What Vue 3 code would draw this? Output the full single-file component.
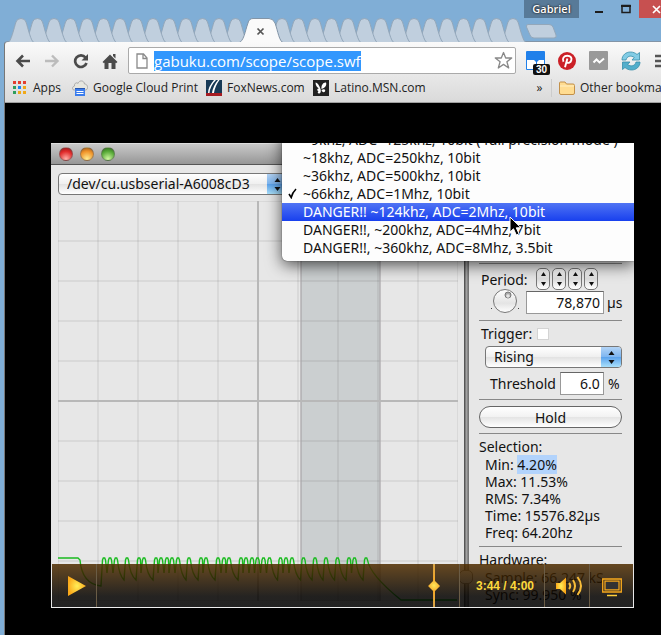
<script setup>
import { onMounted, ref } from 'vue'

const address = ref('gabuku.com/scope/scope.swf')
const addressBox = ref(null)
const port = ref('/dev/cu.usbserial-A6008cD3')
const edge = ref('Rising')
const period = ref('78,870')
const threshold = ref('6.0')
const position = ref(227)
const trigger = ref(false)

const leftTabs = Array.from({ length: 14 }, (_, i) => 17 + i * 16.5).reverse()
const rightTabs = Array.from({ length: 15 }, (_, i) => 278 + i * 16.5).reverse()

const rates = [
  '~9khz, ADC=125khz, 10bit ( full precision mode )',
  '~18khz, ADC=250khz, 10bit',
  '~36khz, ADC=500khz, 10bit',
  '~66khz, ADC=1Mhz, 10bit',
  'DANGER!! ~124khz, ADC=2Mhz, 10bit',
  'DANGER!!, ~200khz, ADC=4Mhz, 7bit',
  'DANGER!!, ~360khz, ADC=8Mhz, 3.5bit'
]
const checked = 3
const hovered = 4

const readings = [
  ['Min:', '4.20%'],
  ['Max:', '11.53%'],
  ['RMS:', '7.34%'],
  ['Time:', '15576.82µs'],
  ['Freq:', '64.20hz']
]

const appColours = ['#e33e2f', '#e33e2f', '#e33e2f', '#2f9e5c', '#1a84f2', '#f0a818', '#2f9e5c', '#f0a818', '#f0a818']

const peaks = [
  46, 52, 58, 69, 81, 86, 98, 103, 109, 114, 120, 131, 143, 148, 160, 166, 171, 183, 188, 194,
  199.5, 205.5, 211.5, 222.5, 228, 234, 245.5, 257, 268, 279.5, 291, 296.5, 308
]
const gridLines = [0, 1, 2, 3, 4, 5, 6, 7, 8, 9, 10].map(n => n * 40)

function buildTrace() {
  let d = 'M0 357H20L22 359Q24 383 43 385'
  peaks.forEach((p, i) => {
    d += `L${p - 1.5} 359L${p - 0.7} 357H${p + 0.7}L${p + 1.5} 359`
    const next = peaks[i + 1]
    if (next) {
      const wide = next - p > 8
      const low = wide ? 379 : 372
      d += wide ? `Q${p + 3} 374 ${next - 3} ${low}` : `L${next - 3} ${low}`
    }
  })
  return d + 'Q312 374 343 399H399'
}
const trace = buildTrace()

onMounted(() => {
  addressBox.value.focus()
  addressBox.value.select()
})
</script>

<template>
  <div class="desktop">
    <header class="frame-top">
      <svg class="tabs" width="580" height="42" viewBox="0 0 580 42" aria-hidden="true">
        <g fill="#c0cfde" stroke="#93a7ba" stroke-width="1">
          <path v-for="c in rightTabs" :key="c" :transform="`translate(${c} 0)`" d="M-13 42.500C-10 42-7 28-5 22Q-4 18.500 0 18.500Q4 18.500 5 22C7 28 10 42 13 42.500" />
          <path v-for="c in leftTabs" :key="c" :transform="`translate(${c} 0)`" d="M-13 42.500C-10 42-7 28-5 22Q-4 18.500 0 18.500Q4 18.500 5 22C7 28 10 42 13 42.500" />
          <path d="M524 24.500H545Q548 24.500 549 27L552 35Q553 38 550 38H530Q527 38 526 35L522.500 27Q522 24.500 524 24.500Z" />
        </g>
        <path d="M234 43C240 42 241 31 244 23Q245 18.500 249 18.500H265Q269 18.500 271 23C274 31 275 42 280 43" fill="#fafafa" stroke="#8395a7" />
      </svg>
      <button class="tab-close" aria-label="Close tab">
        <svg width="9" height="9" viewBox="0 0 9 9"><path d="M1.500 1.500L7.500 7.500M7.500 1.500L1.500 7.500" stroke="#555" stroke-width="1.700" /></svg>
      </button>
      <div class="window-controls">
        <button class="profile">Gabriel</button>
        <button class="minimise" aria-label="Minimize"><svg width="8" height="18"><path d="M0 12H8" stroke="#1d1d1d" stroke-width="2" /></svg></button>
        <button class="maximise" aria-label="Maximize"><svg width="10" height="18"><path d="M1 5.500H9V12.500H1Z" fill="none" stroke="#1d1d1d" stroke-width="1.500" /><path d="M0 6H10" stroke="#1d1d1d" stroke-width="2" /></svg></button>
        <button class="close" aria-label="Close"><svg width="9" height="18"><path d="M1 6L8 13M8 6L1 13" stroke="#fff" stroke-width="1.700" /></svg></button>
      </div>
    </header>

    <div class="browser">
      <div class="toolbar">
        <nav class="nav">
          <button aria-label="Back"><svg width="16" height="14" viewBox="0 0 16 14"><path d="M8 1.500L2.500 7L8 12.500M3 7H15" fill="none" stroke="#4b4b4b" stroke-width="2.600" /></svg></button>
          <button aria-label="Forward"><svg width="16" height="14" viewBox="0 0 16 14"><path d="M8 1.500L13.500 7L8 12.500M13 7H1" fill="none" stroke="#bcbcbc" stroke-width="2.400" /></svg></button>
          <button aria-label="Reload"><svg width="16" height="16" viewBox="0 0 16 16"><path d="M12.500 4.500A5.800 5.800 0 1 0 13.500 10" fill="none" stroke="#4b4b4b" stroke-width="2.700" /><path d="M15 1V7.500H8.500Z" fill="#4b4b4b" /></svg></button>
          <button aria-label="Home"><svg width="16" height="16" viewBox="0 0 16 16"><path d="M0.500 9L8 1.500L15.500 9L14 10.200L13.500 9.600V16H9.500V10H6.500V16H2.500V9.600L2 10.200ZM11 1H13.500V5.500L11 3Z" fill="#4b4b4b" /></svg></button>
        </nav>
        <div class="omnibox">
          <svg width="12" height="16" viewBox="0 0 12 16"><path d="M1 1H7.500L11 5V15H1ZM7 1V5.500H11" fill="#fff" stroke="#8a8a8a" stroke-width="1.300" /></svg>
          <input ref="addressBox" v-model="address" class="address" aria-label="Address" spellcheck="false">
          <button aria-label="Bookmark this page"><svg width="19" height="19" viewBox="0 0 19 19"><path d="M9.500 1.500L11.700 7H17.700L12.900 10.800L14.700 17L9.500 13.400L4.300 17L6.100 10.800L1.300 7H7.300Z" fill="#fff" stroke="#888" stroke-width="1.300" stroke-linejoin="round" /></svg></button>
        </div>
        <div class="extensions">
          <button class="tiles" aria-label="Tab count">
            <svg width="19" height="19" viewBox="0 0 19 19"><rect width="19" height="19" rx="1" fill="#2080ea" /><path d="M1 9H8L10 11V18H1ZM11 11L13 9H18V18H11Z" fill="#fff" /></svg>
            <span class="badge">30</span>
          </button>
          <button aria-label="Pin it"><svg width="18" height="18" viewBox="0 0 18 18"><circle cx="9" cy="9" r="9" fill="#cb2027" /><path d="M5.500 9.800C3.800 6.500 6 3.800 9.300 3.800C12.700 3.800 14 6 13.300 8.300C12.700 10.800 10.300 11.500 8.700 10.200M9.400 6.500L7 15.300" fill="none" stroke="#fff" stroke-width="1.900" /></svg></button>
          <button aria-label="Statistics"><svg width="19" height="19" viewBox="0 0 19 19"><rect width="19" height="19" rx="1" fill="#999" /><path d="M4.500 11.500L7.500 8.500L10.500 11.500L15 7.500" fill="none" stroke="#fff" stroke-width="2" /></svg></button>
          <button aria-label="Sync"><svg width="20" height="20" viewBox="0 0 20 20"><g stroke="#378eaa" stroke-width=".8"><path d="M1 9C1 4 5 1 9.500 1C12 1 14.500 2 16 3.500L18.500 1.500V9H11L13.300 6.500C10 4 6 5 5 9Z" fill="#82cce5" /><path d="M19 11C19 16 15 19 10.500 19C8 19 5.500 18 4 16.500L1.500 18.500V11H9L6.700 13.500C10 16 14 15 15 11Z" fill="#53aecb" /></g></svg></button>
          <button aria-label="Menu"><svg width="14" height="14" viewBox="0 0 14 14"><path d="M1 2H14M1 7H14M1 12H14" stroke="#555" stroke-width="2.600" /></svg></button>
        </div>
      </div>
      <nav class="bookmarks">
        <a class="apps" href="#"><svg width="13" height="13" viewBox="0 0 13 13"><rect v-for="(c, i) in appColours" :key="i" :x="(i % 3) * 5" :y="Math.floor(i / 3) * 5" width="3" height="3" :fill="c" /></svg>Apps</a>
        <a class="cloud" href="#"><svg width="16" height="16" viewBox="0 0 16 16"><path d="M2 10C0 10 0 6.500 2.500 6C2 3 5 2 6 3.500C7 0 12 0 12.500 4C16 4 16.500 9 14 10Z" fill="#e6e6df" stroke="#aaa" /><rect x="3" y="9" width="10" height="7" fill="#3b7ded" /><path d="M3 8.500H13" stroke="#2656b0" /><path d="M4.500 11.500H11.500M4.500 13.500H11.500" stroke="#fff" /></svg>Google Cloud Print</a>
        <a class="fox" href="#"><svg width="16" height="16" viewBox="0 0 16 16"><rect width="16" height="16" fill="#183a56" /><path d="M0 13H16V16H0Z" fill="#a61c22" /><path d="M2 13Q2 7 8 0H10Q4 6 3.500 13ZM6 13Q7 6 12 0H13.500Q9 6 8 13Z" fill="#fff" /></svg>FoxNews.com</a>
        <a class="msn" href="#"><svg width="16" height="16" viewBox="0 0 16 16"><rect width="16" height="16" fill="#222" /><path d="M7.500 9C6 5 4.500 2.500 2.500 2.500C2.500 5.500 4 7.500 6 8.500C4 8.500 3.500 10.500 5.500 11C4 12.500 5 14 6.500 13.500C8 13 8 11 7.500 9ZM8.500 9C8 5 10.500 2 13 2.500C14 5.500 12 8 8.500 9ZM8.500 10C11 8.500 13 9.500 12 11.500C10.500 13 9 12 8.500 10Z" fill="#fff" /></svg>Latino.MSN.com</a>
        <div class="bookmarks-end">
          <button class="more" aria-label="More bookmarks">»</button>
          <a class="other" href="#"><svg width="16" height="14" viewBox="0 0 16 14"><path d="M.5 12V2Q.5 1 1.500 1H6L7.500 3H14Q15.500 3 15.500 4.500V12Q15.500 13.500 14 13.500H2Q.5 13.500 .5 12Z" fill="#ffdc91" stroke="#c2904a" /><path d="M1 5H15" stroke="#fff0c4" /></svg>Other bookmarks</a>
        </div>
      </nav>

      <main class="page">
        <section class="video">
          <div class="titlebar"><i class="light red"></i><i class="light amber"></i><i class="light green"></i></div>
          <div class="scope">
            <div class="plot-pane">
              <div class="select-wrap port">
                <select v-model="port" aria-label="Serial port"><option>/dev/cu.usbserial-A6008cD3</option></select>
                <span class="cap"><svg width="7" height="13" viewBox="0 0 7 13"><path d="M3.500 0L6.500 4H.5ZM3.500 13L.5 9H6.500Z" fill="#111" /></svg></span>
              </div>
              <svg class="plot" viewBox="0 0 400 400" role="img" aria-label="Signal trace">
                <path d="M243 0H322V400H243Z" fill="#cbcfd0" />
                <g stroke="#000" stroke-opacity=".06" stroke-width="2">
                  <path v-for="n in gridLines" :key="'v' + n" :d="`M${n} 0V400`" />
                  <path v-for="n in gridLines" :key="'h' + n" :d="`M0 ${n}H400`" />
                </g>
                <path d="M243 0V400M322 0V400" stroke="#a9a5a8" stroke-opacity=".6" stroke-width="2" />
                <path d="M200 0V400M0 200H400" stroke="#b8b8b8" stroke-width="2" />
                <path :d="trace" fill="none" stroke="#1abb1f" stroke-width="1.400" />
              </svg>
            </div>
            <div class="splitter"><i class="handle"></i></div>
            <aside class="panel">
              <div class="group period">
                <div class="row">
                  <label for="period">Period:</label>
                  <div class="steppers">
                    <button v-for="n in 4" :key="n" :aria-label="`Step digit ${n}`"><svg width="13" height="20" viewBox="0 0 13 20"><path d="M6.500 3L9 7H4ZM6.500 17L4 13H9Z" fill="#111" /></svg></button>
                  </div>
                </div>
                <div class="row dial-row">
                  <svg class="dial" width="30" height="30" viewBox="0 0 30 30" role="img" aria-label="Period dial">
                    <defs><linearGradient id="dialFill" x2="0" y2="1"><stop stop-color="#fff" /><stop offset=".6" stop-color="#e4e4e4" /><stop offset="1" stop-color="#fff" /></linearGradient></defs>
                    <circle cx="15" cy="17" r="11.500" fill="url(#dialFill)" stroke="#777" /><circle cx="18" cy="11" r="3" fill="#aaa" stroke="#777" /><circle cx="18" cy="12" r="1.800" fill="#e5e5e5" />
                    <path d="M15 1V2M1 24.500H2M28 24.500H29" stroke="#444" />
                  </svg>
                  <input id="period" v-model="period" class="number wide"><span>µs</span>
                </div>
              </div>
              <div class="group trigger">
                <div class="row"><label for="trigger">Trigger:</label><input id="trigger" v-model="trigger" class="tick" type="checkbox"></div>
                <div class="select-wrap edge">
                  <select v-model="edge" aria-label="Trigger edge"><option>Rising</option></select>
                  <span class="cap"><svg width="7" height="13" viewBox="0 0 7 13"><path d="M3.500 0L6.500 4H.5ZM3.500 13L.5 9H6.500Z" fill="#111" /></svg></span>
                </div>
                <div class="row threshold"><label for="threshold">Threshold</label><input id="threshold" v-model="threshold" class="number"><span>%</span></div>
              </div>
              <div class="group"><button class="hold">Hold</button></div>
              <div class="group readings">
                <h2>Selection:</h2>
                <p v-for="(r, i) in readings" :key="r[0]">{{ r[0] }} <span :class="{ marked: i === 0 }">{{ r[1] }}</span></p>
              </div>
              <div class="group readings hardware">
                <h2>Hardware:</h2>
                <p>Sample: 66.247 kS</p>
                <p>Sync: 99.950 %</p>
              </div>
            </aside>
          </div>

          <ul class="menu">
            <li v-for="(rate, i) in rates" :key="rate">
              <button :class="{ hovered: i === hovered }">
                <svg v-if="i === checked" class="check" width="9" height="11" viewBox="0 0 9 11"><path d="M1 6L3.200 9.500Q4.500 4.500 8 1" fill="none" stroke="#000" stroke-width="1.600" /></svg>{{ rate }}
              </button>
            </li>
          </ul>
          <svg class="cursor" width="14" height="21" viewBox="0 0 14 21" aria-hidden="true"><path d="M1 1V16L4.500 12.800L7.300 19L10 17.800L7.300 11.800H12Z" fill="#000" stroke="#fff" /></svg>

          <div class="controls">
            <button class="play" aria-label="Play"><svg width="18" height="20" viewBox="0 0 18 20"><defs><radialGradient id="gold"><stop stop-color="#ffee58" /><stop offset="1" stop-color="#fba91a" /></radialGradient></defs><path d="M0 0L18 10L0 20Z" fill="url(#gold)" /></svg></button>
            <input v-model="position" class="seek" type="range" min="0" max="240" aria-label="Seek">
            <div class="time">3:44 / 4:00</div>
            <button class="volume" aria-label="Volume"><svg width="28" height="20" viewBox="0 0 28 20"><path d="M0 7H4L10 1.500V18.500L4 13H0Z" fill="url(#gold)" /><path d="M13 7Q15.500 10 13 13M17 4Q21 10 17 16M21.500 1Q28.500 10 21.500 19" fill="none" stroke="#f8bd39" stroke-width="2" /></svg></button>
            <button class="screen" aria-label="Full screen"><svg width="20" height="19" viewBox="0 0 20 19"><path d="M.7 1H19.300V14H.7Z" fill="none" stroke="#f8a91d" stroke-width="1.300" /><path d="M3 3.200H17V11.800H3Z" fill="#333" stroke="#f8a91d" stroke-width="1.200" /><path d="M5 17.500H15" stroke="#ffcf3c" stroke-width="1.500" /></svg></button>
          </div>
        </section>
      </main>
    </div>
  </div>
</template>

<style>
body { background: #80aed6; overflow: hidden; }
</style>

<style scoped>
* { box-sizing: border-box; }
.desktop { min-height: 100vh; display: flex; flex-direction: column; padding-left: 4px; background: #80aed6; overflow: hidden; font: 12px/18px "Open Sans", "Noto Sans", sans-serif; color: #222; }
button { border: 0; padding: 0; margin: 0; background: none; font: inherit; color: inherit; display: flex; align-items: center; justify-content: center; flex: none; }
svg { display: block; flex: none; }
a { color: inherit; text-decoration: none; display: flex; align-items: center; flex: none; white-space: nowrap; }
.frame-top { position: relative; height: 42px; z-index: 1; }
.tab-close { position: absolute; left: 252px; top: 27px; }
.window-controls { position: absolute; top: 0; right: 0; height: 18px; display: flex; }
.profile { width: 55px; background: #587a98; color: #fff; font-size: 11px; font-weight: 600; text-shadow: 0 0 2px #222, 0 0 2px #222; margin-right: 16px; }
.minimise { margin-right: 18px; }
.maximise { margin-right: 8px; }
.close { width: 22px; background: #c75050; justify-content: flex-end; overflow: hidden; padding-left: 18px; }
.browser { flex: 1; display: flex; flex-direction: column; border-left: 1px solid #777; border-top-left-radius: 4px; background: #dcdcdc; border-top: 1px solid #8395a7; margin-top: -1px; }
.toolbar { display: flex; align-items: center; padding-top: 4px; background: linear-gradient(#fafafa, #e8e8e8); border-top-left-radius: 4px; }
.nav { display: flex; align-items: center; gap: 13px; padding: 0 10px 0 10px; height: 27px; }
.omnibox { flex: 1; min-width: 0; display: flex; align-items: center; height: 27px; padding: 0 2px 0 7px; gap: 6px; border: 1px solid #aaa; border-radius: 2px; background: #fff; }
.address { flex: 1; min-width: 0; border: 0; outline: 0; padding: 0; background: none; font: 15px/20px "Open Sans", sans-serif; color: #222; }
.address::selection { background: #3297fd; color: #fff; }
.extensions { width: 145px; display: flex; align-items: center; gap: 13px; padding-left: 10px; overflow: hidden; height: 29px; }
.tiles { position: relative; }
.badge { position: absolute; left: 7px; top: 13px; width: 17px; height: 11px; border-radius: 2px; background: #111; color: #fff; font: bold 10px/11px "Liberation Sans", sans-serif; text-align: center; }
.bookmarks { display: flex; align-items: center; height: 28px; padding: 0 0 2px 8px; background: linear-gradient(#e8e8e8, #dadada); border-bottom: 1px solid #a0a0a0; }
.apps { gap: 7px; width: 59px; }
.cloud { gap: 5px; width: 134px; }
.fox { gap: 5px; width: 107px; }
.msn { gap: 5px; }
.bookmarks-end { margin-left: auto; width: 125px; display: flex; overflow: hidden; }
.more { width: 16px; border-right: 1px solid #ccc; padding-right: 8px; }
.other { gap: 5px; padding-left: 7px; }
.page { flex: 1; background: #000; padding: 40px 27px 27px 46px; }

.video { position: relative; overflow: hidden; background: #e7e7e7; font: 14px/17px "Noto Sans", sans-serif; color: #111; border-bottom: 1px solid #eee; }
.titlebar { height: 22px; padding: 3px 0 0 8px; display: flex; gap: 7px; background: linear-gradient(#c9c9c9, #969696); border-bottom: 1px solid #555; border-top: 1px solid #ddd; }
.light { width: 14px; height: 14px; border-radius: 50%; border: 1px solid #6668; }
.red { background: radial-gradient(circle at 50% 90%, #ffb0a8, #e02a2a 60%, #8a1515); }
.amber { background: radial-gradient(circle at 50% 90%, #ffec90, #f0942a 60%, #9a5515); }
.green { background: radial-gradient(circle at 50% 90%, #d0f8a0, #58aa38 60%, #2a6518); }
.scope { display: flex; }
.plot-pane { flex: 1; min-width: 0; padding: 8px 6px 6px 7px; display: flex; flex-direction: column; gap: 6px; }
.plot { width: 100%; height: auto; overflow: hidden; }
.select-wrap { position: relative; height: 22px; border: 1px solid #777; border-radius: 4px; overflow: hidden; background: linear-gradient(#fff, #efefef 50%, #e2e2e2 51%, #fff); }
.select-wrap select { appearance: none; display: block; width: 100%; height: 20px; padding: 0 24px 0 8px; border: 0; outline: 0; background: none; font: 14px/20px "Noto Sans", sans-serif; color: #111; }
.port { width: 230px; }
.cap { position: absolute; top: 0; right: 0; bottom: 0; width: 20px; display: flex; align-items: center; justify-content: center; pointer-events: none; background: linear-gradient(#b3d4f6, #7db5f0 50%, #5ba2ec 51%, #a9e0fb); }
.splitter { width: 5px; background: linear-gradient(90deg, #555 1px, #aaa 2px, #999 3px, #777 4px); position: relative; }
.handle { position: absolute; bottom: 23px; left: -5px; width: 14px; height: 14px; border: 1px solid #777; border-radius: 5px; background: #ddd; }
.panel { width: 165px; padding: 98px 12px 0 10px; }
.group { border-top: 1px solid #888; }
.row { display: flex; align-items: center; }
.period { padding: 4px 0 6px 2px; }
.period .row { justify-content: space-between; height: 22px; }
.period .row.dial-row { justify-content: flex-start; height: 24px; padding-left: 9px; gap: 6px; }
.steppers { display: flex; gap: 2px; padding-right: 24px; }
.steppers button { width: 14px; height: 22px; border: 1px solid #777; border-radius: 5px; background: linear-gradient(#fff, #ddd 50%, #fff); overflow: hidden; }
.dial { margin-bottom: 6px; }
.number { width: 44px; height: 23px; border: 1px solid #999; border-top-color: #666; padding: 0 3px; outline: 0; background: #fff; text-align: right; font: 14px/20px "Noto Sans", sans-serif; color: #111; }
.number.wide { width: 78px; }
.dial-row span { margin-left: -3px; }
.trigger { padding: 0 0 5px; }
.trigger .row { height: 25px; padding-left: 2px; gap: 5px; }
.tick { appearance: none; width: 12px; height: 12px; margin: 0; background: #fff; border: 1px solid #d4d4d4; }
.edge { margin-left: 6px; }
.trigger .threshold { padding-left: 11px; height: 30px; gap: 4px; margin-bottom: -4px; }
.hold { width: 100%; height: 22px; margin: 6px 0 5px; border: 1px solid #666; border-radius: 11px; background: linear-gradient(#fff, #f2f2f2 50%, #e4e4e4 51%, #fff); }
.readings { padding: 4px 0 5px; }
.hardware { padding-bottom: 3px; }
.readings h2 { margin: 0 0 1px; font: inherit; }
.readings p { margin: 0; padding-left: 6px; white-space: nowrap; }
.marked { background: #b2d3fc; }
.menu { position: absolute; top: -12px; right: 0; width: 352px; margin: 0; padding: 0 0 4px; list-style: none; background: #fdfdfd; border-radius: 0 0 0 5px; box-shadow: 0 4px 16px #000a, 0 0 1px #000; }
.menu button { width: 100%; height: 18px; justify-content: flex-start; padding-left: 21px; position: relative; white-space: nowrap; line-height: 18px; }
.menu .hovered { background: linear-gradient(#5074f4, #1840ee); color: #fff; }
.check { position: absolute; left: 6px; top: 3px; }
.cursor { position: absolute; left: 458px; top: 73px; }
.controls { position: absolute; left: 1px; right: 1px; bottom: 0; height: 43px; display: flex; background: linear-gradient(rgba(81, 46, 0, .86), rgba(5, 3, 1, .86) 75%, rgba(2, 2, 2, .86)); }
.play { width: 45px; padding-left: 6px; border-right: 1px solid #6a5c46; }
.seek { flex: 1; min-width: 0; appearance: none; margin: 0; height: 43px; background: none; border-right: 1px solid #6a5c46; overflow: hidden; }
.seek::-webkit-slider-runnable-track { height: 43px; }
.seek::-webkit-slider-thumb { appearance: none; width: 12px; height: 43px; background: radial-gradient(circle, #ffe95a, #f5a92a 6px, #d8a548); clip-path: polygon(5px 0, 7px 0, 7px 17px, 12px 22px, 7px 27px, 7px 43px, 5px 43px, 5px 27px, 0 22px, 5px 17px); }
.time { width: 85px; border-right: 1px solid #6a5c46; color: #fcd93c; font: bold 12px/45px "Liberation Sans", sans-serif; text-align: center; padding-left: 6px; }
.volume { width: 45px; padding-left: 6px; border-right: 1px solid #6a5c46; }
.screen { width: 43px; padding-top: 3px; }
</style>
